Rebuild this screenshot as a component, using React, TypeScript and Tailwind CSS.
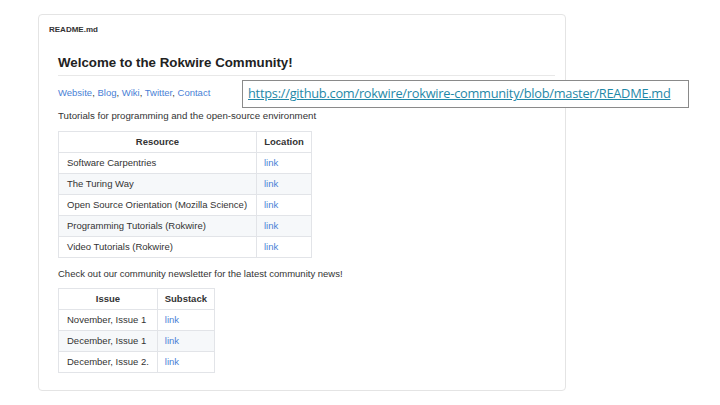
import React from "react";

const tutorials = [
	"Software Carpentries",
	"The Turing Way",
	"Open Source Orientation (Mozilla Science)",
	"Programming Tutorials (Rokwire)",
	"Video Tutorials (Rokwire)",
];

const issues = ["November, Issue 1", "December, Issue 1", "December, Issue 2."];

const Link: React.FC = () => <span className="text-[#4a7fd6]">link</span>;

const App: React.FC = () => {
	return (
		<div className="relative w-[720px] h-[405px] bg-white font-['Liberation_Sans',Arial,sans-serif] text-[#333]">
			<div className="absolute left-[38px] top-[14px] w-[528px] h-[377px] rounded border border-[#e4e4e4]">
				<div className="pl-[10px] pt-[9px] text-[8px] font-bold text-[#333]">README.md</div>
				<div className="pl-[19px] pr-[10px] pt-[18px]">
					<h1 className="text-[13.3px] font-bold text-[#222] pb-[4px] border-b border-[#e8e8e8] leading-[17px]">
						Welcome to the Rokwire Community!
					</h1>
					<p className="mt-[11px] text-[9.5px] text-[#4a7fd6] leading-[12px]">
						Website<span className="text-[#333]">, </span>Blog<span className="text-[#333]">, </span>Wiki
						<span className="text-[#333]">, </span>Twitter<span className="text-[#333]">, </span>Contact
					</p>
					<p className="mt-[11px] text-[9.7px] leading-[12px]">
						Tutorials for programming and the open-source environment
					</p>
					<table className="mt-[9px] border-collapse text-[9.5px] whitespace-nowrap">
						<thead>
							<tr className="h-[21px]">
								<th className="border border-[#e2e4e8] px-[8px] w-[198px] font-bold">Resource</th>
								<th className="border border-[#e2e4e8] px-[6px] w-[55px] font-bold">Location</th>
							</tr>
						</thead>
						<tbody>
							{tutorials.map((t, i) => (
								<tr key={t} className={`h-[21px] ${i % 2 === 1 ? "bg-[#f6f8fa]" : "bg-white"}`}>
									<td className="border border-[#e2e4e8] px-[8px] text-left">{t}</td>
									<td className="border border-[#e2e4e8] px-[7px]">
										<Link />
									</td>
								</tr>
							))}
						</tbody>
					</table>
					<p className="mt-[10px] text-[9.5px] leading-[12px]">
						Check out our community newsletter for the latest community news!
					</p>
					<table className="mt-[8px] border-collapse text-[9.5px] whitespace-nowrap">
						<thead>
							<tr className="h-[21px]">
								<th className="border border-[#e2e4e8] px-[8px] w-[98px] font-bold">Issue</th>
								<th className="border border-[#e2e4e8] px-[6px] w-[57px] font-bold">Substack</th>
							</tr>
						</thead>
						<tbody>
							{issues.map((t, i) => (
								<tr key={t} className={`h-[21px] ${i % 2 === 1 ? "bg-[#f6f8fa]" : "bg-white"}`}>
									<td className="border border-[#e2e4e8] px-[8px] text-left">{t}</td>
									<td className="border border-[#e2e4e8] px-[7px]">
										<Link />
									</td>
								</tr>
							))}
						</tbody>
					</table>
				</div>
			</div>
			<div className="absolute left-[242px] top-[80px] w-[447px] h-[28px] bg-white border border-[#8a8a8a] flex items-center pl-[5px]">
				<span className="text-[12.8px] text-[#1f88a8] underline font-['Open_Sans',sans-serif] tracking-[-0.25px]">
					https://github.com/rokwire/rokwire-community/blob/master/README.md
				</span>
			</div>
		</div>
	);
};

export default App;
